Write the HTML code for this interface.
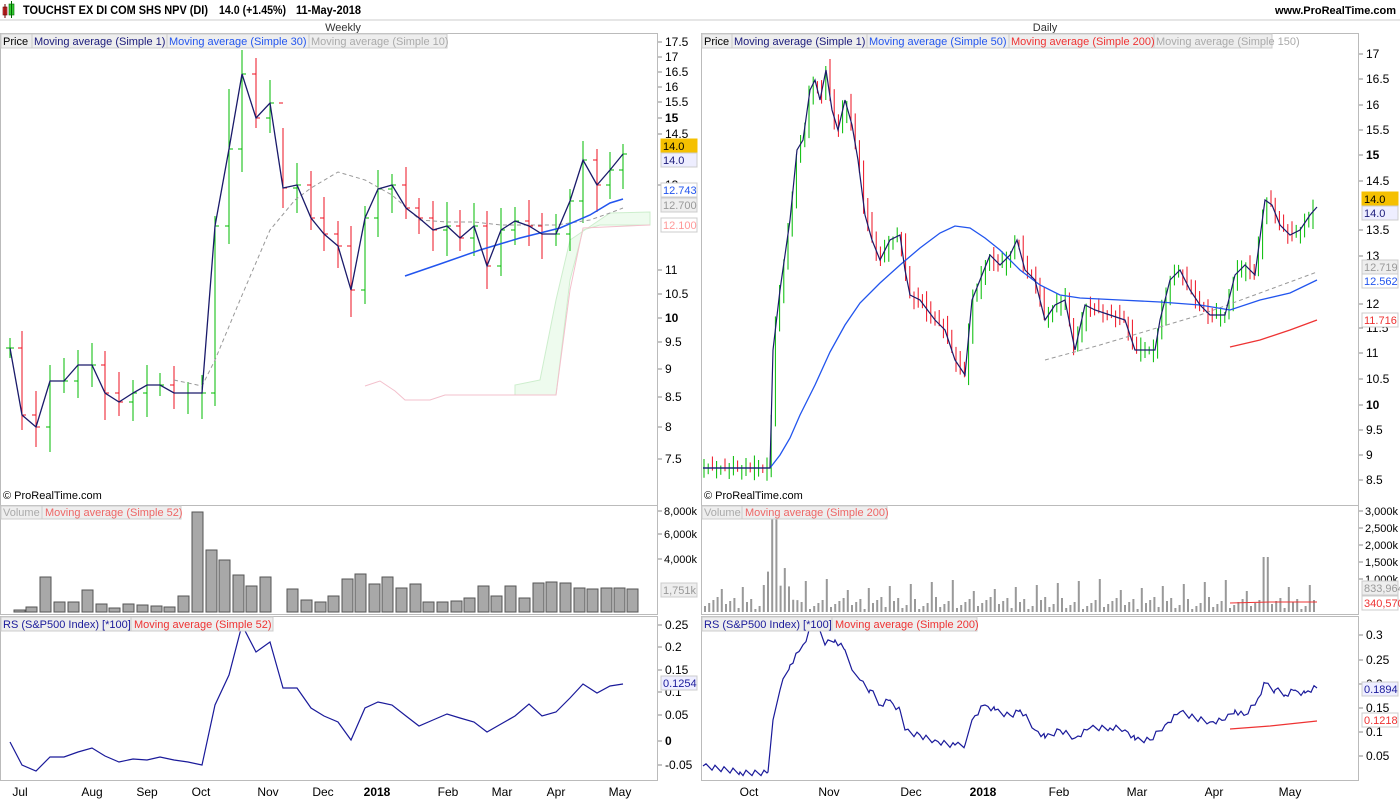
<!DOCTYPE html>
<html><head><meta charset="utf-8"><style>
body{margin:0;width:1400px;height:800px;background:#fff;overflow:hidden;font-family:"Liberation Sans",sans-serif}
svg text{font-family:"Liberation Sans",sans-serif}
</style></head><body>
<svg id="s" width="1400" height="800" xmlns="http://www.w3.org/2000/svg" font-size="11">
<rect width="1400" height="800" fill="#fff"/>
<rect x="3" y="7" width="4" height="8" fill="#d33" stroke="#600" stroke-width="0.6"/>
<line x1="5" y1="4" x2="5" y2="18" stroke="#600"/>
<rect x="9" y="4" width="5" height="11" fill="#3c3" stroke="#060" stroke-width="0.6"/>
<line x1="11.5" y1="1" x2="11.5" y2="18" stroke="#060"/>
<g font-weight="bold" font-size="12">
<text x="23" y="14" textLength="185" lengthAdjust="spacingAndGlyphs">TOUCHST EX DI COM SHS NPV (DI)</text>
<text x="219" y="14" textLength="67" lengthAdjust="spacingAndGlyphs">14.0 (+1.45%)</text>
<text x="296" y="14" textLength="65" lengthAdjust="spacingAndGlyphs">11-May-2018</text>
<text x="1396" y="14" text-anchor="end" font-size="11">www.ProRealTime.com</text>
</g>
<line x1="0" y1="20" x2="1400" y2="20" stroke="#ccc"/>
<text x="343" y="31" text-anchor="middle" fill="#333">Weekly</text>
<text x="1045" y="31" text-anchor="middle" fill="#333">Daily</text>
<g fill="none" stroke="#bbb">
<rect x="0.5" y="33.5" width="657" height="472"/>
<rect x="0.5" y="505.5" width="657" height="109"/>
<rect x="0.5" y="616.5" width="657" height="164"/>
<rect x="701.5" y="33.5" width="657" height="472"/>
<rect x="701.5" y="505.5" width="657" height="109"/>
<rect x="701.5" y="616.5" width="657" height="164"/>
</g>
<g id="g"></g>
<g font-size="11">
<rect x="1" y="34" width="446" height="14" fill="#eee" stroke="#ccc"/>
<line x1="32" y1="34" x2="32" y2="48" stroke="#ccc"/><line x1="167" y1="34" x2="167" y2="48" stroke="#ccc"/><line x1="309" y1="34" x2="309" y2="48" stroke="#ccc"/>
<text x="3" y="45">Price</text>
<text x="34" y="45" fill="#1a1a7a">Moving average (Simple 1)</text>
<text x="169" y="45" fill="#2255ee">Moving average (Simple 30)</text>
<text x="311" y="45" fill="#aaa">Moving average (Simple 10)</text>
<rect x="702" y="34" width="570" height="14" fill="#eee" stroke="#ccc"/>
<line x1="732" y1="34" x2="732" y2="48" stroke="#ccc"/><line x1="867" y1="34" x2="867" y2="48" stroke="#ccc"/><line x1="1009" y1="34" x2="1009" y2="48" stroke="#ccc"/><line x1="1154" y1="34" x2="1154" y2="48" stroke="#ccc"/>
<text x="704" y="45">Price</text>
<text x="734" y="45" fill="#1a1a7a">Moving average (Simple 1)</text>
<text x="869" y="45" fill="#2255ee">Moving average (Simple 50)</text>
<text x="1011" y="45" fill="#ee3333">Moving average (Simple 200)</text>
<text x="1156" y="45" fill="#aaa">Moving average (Simple 150)</text>
<rect x="1" y="506" width="180" height="13" fill="#eee" stroke="#ccc"/>
<line x1="42" y1="506" x2="42" y2="519" stroke="#ccc"/>
<text x="3" y="516" fill="#aaa">Volume</text><text x="45" y="516" fill="#e66">Moving average (Simple 52)</text>
<rect x="702" y="506" width="185" height="13" fill="#eee" stroke="#ccc"/>
<line x1="742" y1="506" x2="742" y2="519" stroke="#ccc"/>
<text x="704" y="516" fill="#aaa">Volume</text><text x="745" y="516" fill="#e66">Moving average (Simple 200)</text>
<rect x="1" y="617" width="272" height="14" fill="#eee" stroke="#ccc"/>
<line x1="131" y1="617" x2="131" y2="631" stroke="#ccc"/>
<text x="3" y="628" fill="#1a1a9a">RS (S&amp;P500 Index) [*100]</text><text x="134" y="628" fill="#e33">Moving average (Simple 52)</text>
<rect x="702" y="617" width="275" height="14" fill="#eee" stroke="#ccc"/>
<line x1="832" y1="617" x2="832" y2="631" stroke="#ccc"/>
<text x="704" y="628" fill="#1a1a9a">RS (S&amp;P500 Index) [*100]</text><text x="835" y="628" fill="#e33">Moving average (Simple 200)</text>
<text x="3" y="499">© ProRealTime.com</text>
<text x="704" y="499">© ProRealTime.com</text>
</g>
</svg>
<script>
var g=document.getElementById('g'),N='http://www.w3.org/2000/svg';
function el(t,a,txt){var e=document.createElementNS(N,t);for(var k in a)e.setAttribute(k,a[k]);if(txt!=null)e.textContent=txt;g.appendChild(e);return e}
function pl(p,c,w,d){el('polyline',{points:p.map(q=>q.join(',')).join(' '),fill:'none',stroke:c,'stroke-width':w||1,'stroke-dasharray':d||''})}
function lab(x,y,t,b){el('line',{x1:x-4,y1:y,x2:x,y2:y,stroke:'#888'});el('text',{x:x+3,y:y+4,'font-size':12,'font-weight':b?'bold':'normal'},t)}
function labs(x,y,t){el('line',{x1:x-4,y1:y,x2:x,y2:y,stroke:'#888'});el('text',{x:x+2,y:y+4,'font-size':11},t)}
[[17.5,42],[17,57],[16.5,72],[16,87],[15.5,102],[15,118,1],[14.5,134],[13,185],[11,270],[10.5,294],[10,318,1],[9.5,342],[9,369],[8.5,397],[8,427],[7.5,459]].forEach(a=>lab(662,a[1],a[0],a[2]));
[[17,54],[16.5,79],[16,105],[15.5,130],[15,155,1],[14.5,181],[13.5,230],[13,256],[12,304],[11.5,328],[11,353],[10.5,379],[10,405,1],[9.5,430],[9,455],[8.5,480]].forEach(a=>lab(1363,a[1],a[0],a[2]));
[['8,000k',511],['6,000k',534],['4,000k',559]].forEach(a=>labs(662,a[1],a[0]));
[['3,000k',511],['2,500k',528],['2,000k',545],['1,500k',562],['1,000k',579]].forEach(a=>labs(1363,a[1],a[0]));
[[0.25,625],[0.2,647],[0.15,670],[0.1,692],[0.05,715],[0,741,1],[-0.05,765]].forEach(a=>lab(662,a[1],a[0],a[2]));
[[0.3,635],[0.25,660],[0.2,684],[0.15,708],[0.1,732],[0.05,756]].forEach(a=>lab(1363,a[1],a[0]));
function box(x,y,t,fg,bg,bd){el('rect',{x:x,y:y-7,width:36,height:14,fill:bg,stroke:bd});el('text',{x:x+2,y:y+4,fill:fg,'font-size':11},t)}
box(661,146,'14.0','#000','#f5c000','#f5c000');box(661,160,'14.0','#1a1a7a','#eef','#ccc');
box(661,190,'12.743','#25e','#fff','#ccc');box(661,205,'12.700','#999','#eee','#ccc');box(661,225,'12.100','#f99','#fff','#ccc');
box(661,590,'1,751k','#999','#eee','#ccc');box(661,683,'0.1254','#1a1a9a','#eef','#ccc');
box(1362,199,'14.0','#000','#f5c000','#f5c000');box(1362,213,'14.0','#1a1a7a','#eef','#ccc');
box(1362,267,'12.719','#999','#eee','#ccc');box(1362,281,'12.562','#25e','#fff','#ccc');box(1362,320,'11.716','#e33','#fff','#ccc');
box(1362,588,'833,964','#999','#eee','#ccc');box(1362,603,'340,570','#e33','#fff','#ccc');
box(1362,689,'0.1894','#1a1a9a','#eef','#ccc');box(1362,720,'0.1218','#e33','#fff','#ccc');
[['Jul',20],['Aug',92],['Sep',147],['Oct',201],['Nov',268],['Dec',323],['2018',377,1],['Feb',448],['Mar',502],['Apr',556],['May',620]].forEach(a=>el('text',{x:a[1],y:796,'text-anchor':'middle','font-size':12,'font-weight':a[2]?'bold':'normal'},a[0]));
[['Oct',749],['Nov',829],['Dec',911],['2018',983,1],['Feb',1059],['Mar',1137],['Apr',1214],['May',1290]].forEach(a=>el('text',{x:a[1],y:796,'text-anchor':'middle','font-size':12,'font-weight':a[2]?'bold':'normal'},a[0]));
var W=[[10,348],[22,415],[36,427],[50,381],[64,381],[78,365],[92,365],[105,393],[119,402],[133,393],[147,385],[160,385],[174,393],[188,393],[202,393],[215,226],[229,149],[242,74],[256,118],[270,103],[283,188],[297,185],[311,218],[324,234],[338,246],[351,290],[365,218],[378,189],[392,185],[406,208],[419,218],[433,230],[447,226],[460,238],[474,226],[487,266],[501,230],[515,221],[529,226],[542,234],[556,234],[570,201],[583,160],[597,185],[610,170],[623,154]];
el('polygon',{points:'515,395 556,395 570,280 583,230 600,225 650,225 650,212 610,213 570,240 556,300 540,380 515,385',fill:'#eefbee',stroke:'#cdeecd'});
pl([[365,386],[380,381],[395,391],[405,400],[430,400],[445,395],[515,395],[556,395],[570,290],[583,228],[650,225]],'#f3c0cc',1);
for(var i=0;i<W.length;i++){var p=W[i],pr=i?W[i-1][1]:p[1],up=p[1]<=pr,c=up?'#0b0':'#e12';var hi=Math.min(p[1],pr)-10-(i*7%15),lo=Math.max(p[1],pr)+10+(i*5%18);if(i==20||i==16){hi=p[1]-60;}el('line',{x1:p[0],y1:hi,x2:p[0],y2:lo,stroke:c});el('line',{x1:p[0]-4,y1:pr,x2:p[0],y2:pr,stroke:c});el('line',{x1:p[0],y1:p[1],x2:p[0]+4,y2:p[1],stroke:c});}
pl([[174,380],[202,386],[215,360],[240,300],[270,230],[295,200],[311,188],[338,172],[365,180],[392,195],[420,220],[447,222],[474,222],[501,225],[556,225],[590,220],[610,213],[623,208]],'#999',1,'4,3');
pl([[405,276],[440,264],[480,250],[520,238],[560,228],[590,215],[610,203],[623,199]],'#25e',1.5);
pl(W,'#1a1a6a',1.3);
var D=[[703,468],[770,468],[773,350],[780,290],[790,220],[797,150],[803,140],[810,90],[815,80],[820,100],[826,70],[832,110],[838,130],[845,100],[852,125],[858,160],[865,215],[872,240],[880,260],[890,240],[900,235],[905,270],[910,295],[920,300],[935,320],[945,330],[955,360],[965,375],[972,300],[980,280],[990,255],[1000,265],[1010,255],[1017,240],[1025,270],[1035,280],[1045,320],[1055,305],[1065,300],[1075,350],[1085,305],[1095,310],[1110,315],[1125,320],[1135,350],[1145,350],[1155,350],[1160,320],[1170,280],[1180,270],[1190,290],[1200,305],[1210,315],[1225,315],[1235,275],[1245,265],[1255,275],[1265,200],[1272,205],[1280,225],[1290,235],[1300,230],[1310,215],[1317,207]];
function dy(x){for(var i=1;i<D.length;i++)if(x<=D[i][0]){var a=D[i-1],b=D[i];return a[1]+(b[1]-a[1])*(x-a[0])/(b[0]-a[0]||1)}return 207}
var k=0;for(var x=704;x<=1317;x+=4.2){k++;var y=dy(x),y0=dy(x-4.2),c=y<=y0?'#0b0':'#e12';if(x<770)c=(k%3)?'#0b0':'#e12';var r=(k*37%23);el('line',{x1:x,y1:Math.min(y,y0)-2-r*0.5,x2:x,y2:Math.max(y,y0)+2+(k*13%19)*0.6,stroke:c,'stroke-width':1});}
pl([[1045,360],[1100,345],[1150,330],[1200,315],[1260,293],[1317,272]],'#999',1,'4,3');
pl([[1230,347],[1260,340],[1290,330],[1317,320]],'#e33',1.3);
pl([[703,468],[770,468],[780,455],[790,438],[800,415],[815,385],[830,352],[845,325],[860,303],[880,283],[900,265],[920,248],[940,233],[955,226],[970,228],[985,238],[1000,250],[1020,270],[1040,285],[1060,295],[1080,298],[1120,300],[1160,302],[1200,305],[1230,310],[1260,300],[1290,293],[1317,280]],'#25e',1.3);
pl(D,'#1a1a6a',1.2);
var VH=[2,5,35,10,10,22,8,4,8,7,6,5,16,100,62,52,37,26,35,0,23,12,10,16,33,38,28,35,24,28,10,10,11,14,26,16,26,14,29,30,29,24,23,24,24,23];
for(var i=0;i<VH.length;i++){if(VH[i])el('rect',{x:W[i][0]+4,y:612-VH[i],width:11,height:VH[i],fill:'#a8a8a8',stroke:'#555'})}
k=0;for(var x=704;x<=1317;x+=4.2){k++;var h=3+(k*29%13)+((k*7)%5==0?18:0);if(Math.abs(x-773)<3)h=94;else if(x>765&&x<800)h+=30-(x-765)*0.8;if(Math.abs(x-1265)<3)h=55;el('rect',{x:x,y:612-h,width:2,height:h,fill:'#999'})}
pl([[1230,603],[1270,602],[1317,602]],'#e33',1);
pl([[10,742],[22,765],[36,771],[50,757],[64,757],[78,752],[92,748],[105,756],[119,762],[133,759],[147,760],[160,757],[174,760],[188,762],[202,765],[215,705],[229,675],[242,625],[256,652],[270,642],[283,688],[297,688],[311,708],[324,716],[338,722],[351,740],[365,708],[378,702],[392,705],[406,716],[419,726],[433,720],[447,714],[460,718],[474,722],[487,732],[501,724],[515,716],[529,704],[542,716],[556,712],[570,698],[583,684],[597,693],[610,686],[623,684]],'#1a1a9a',1.2);
var R=[[703,766],[740,772],[768,772],[773,720],[780,690],[790,665],[800,650],[810,630],[818,625],[825,645],[835,640],[845,650],[852,670],[860,680],[870,690],[880,705],[890,700],[900,710],[905,730],[920,735],[935,740],[955,745],[965,745],[972,720],[985,705],[995,710],[1010,715],[1020,710],[1035,730],[1045,738],[1060,730],[1075,738],[1090,728],[1110,728],[1125,730],[1135,740],[1150,740],[1165,725],[1180,712],[1195,718],[1210,722],[1225,720],[1235,710],[1245,715],[1255,705],[1265,683],[1275,690],[1285,695],[1295,690],[1305,693],[1317,688]];
var RR=[];for(var i=0;i<R.length-1;i++){var a=R[i],b=R[i+1];RR.push(a);if(b[0]-a[0]>8)for(var t=a[0]+3;t<b[0];t+=3)RR.push([t,a[1]+(b[1]-a[1])*(t-a[0])/(b[0]-a[0])+((t*7)%9-4)*0.9])}RR.push(R[R.length-1]);
pl(RR,'#1a1a9a',1.2);
pl([[1230,729],[1270,726],[1317,721]],'#e33',1.2);
</script>
</body></html>
